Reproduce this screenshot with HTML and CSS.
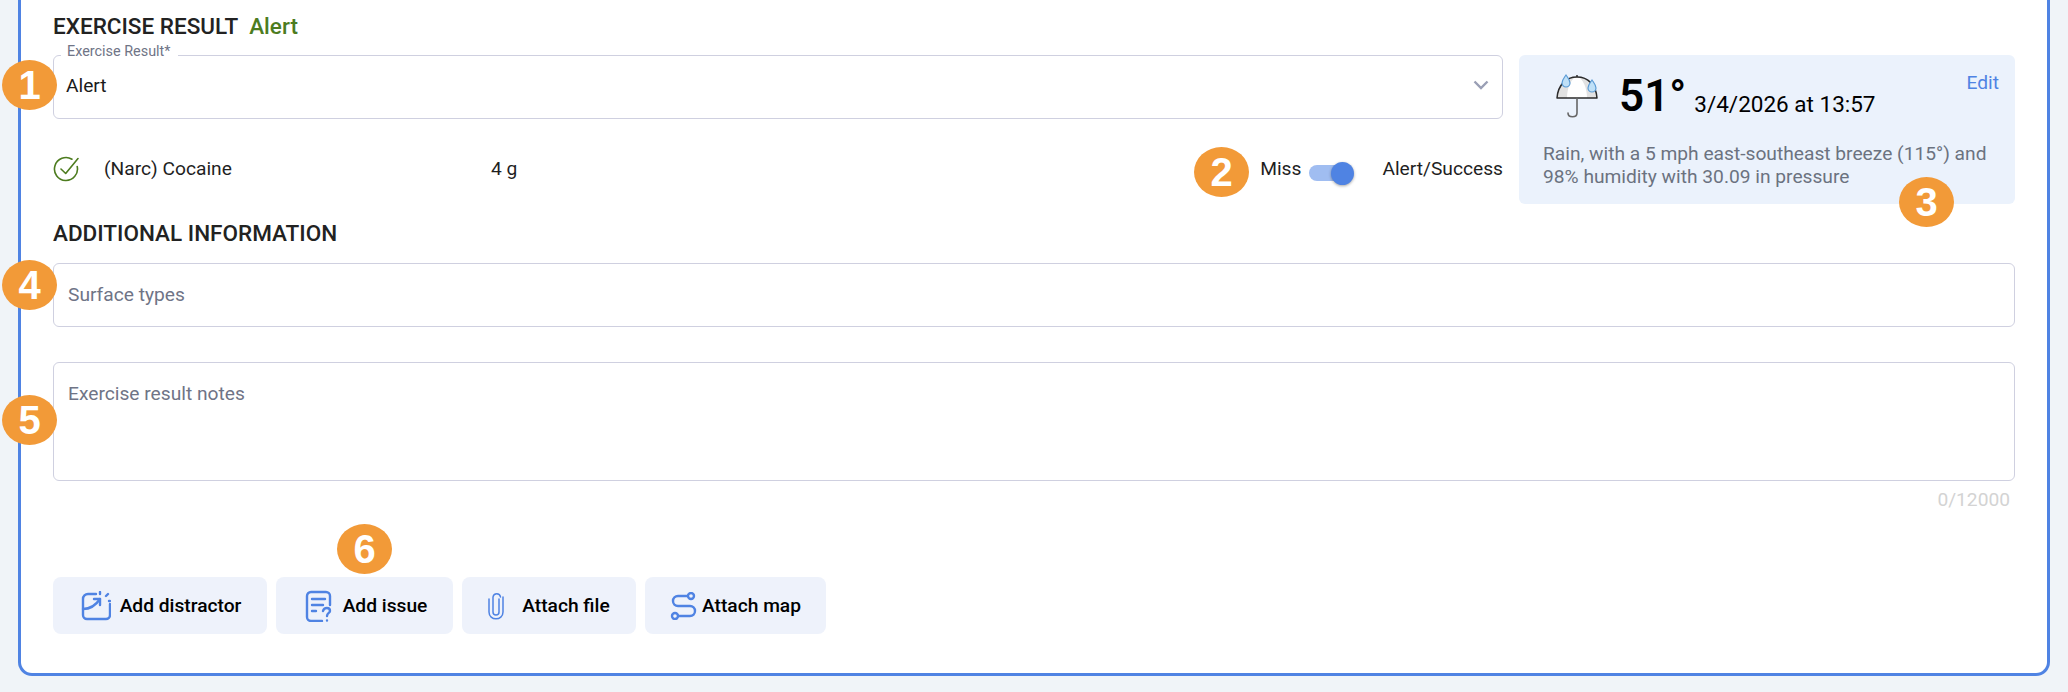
FILE: index.html
```html
<!DOCTYPE html>
<html lang="en">
<head>
<meta charset="utf-8">
<title>Exercise result</title>
<link rel="stylesheet" href="styles.css">
</head>
<body>
<main class="card">
  <h2 class="heading">EXERCISE RESULT <span class="heading-status">Alert</span></h2>
  <div class="top-row">
    <div class="top-left">
      <div class="field field-select">
        <span class="field-label">Exercise Result*</span>
        <span class="field-value">Alert</span>
        <svg class="chevron" viewBox="0 0 16 10" width="16" height="10"><path d="M1.500 1.500l6.500 6.500 6.500-6.500" fill="none" stroke="#9a9fb5" stroke-width="2.400"/></svg>
      </div>
      <div class="result-row">
        <svg class="check" viewBox="0 0 26 28" width="26" height="28"><path d="M24.200 12.500A11.500 11.500 0 1 1 19 5.200" fill="none" stroke="#4d7c1f" stroke-width="1.600" stroke-linecap="round"/><path d="M8 15l4.700 4.500L25 4.500" fill="none" stroke="#4d7c1f" stroke-width="1.600" stroke-linecap="round" stroke-linejoin="round"/></svg>
        <span class="substance">(Narc) Cocaine</span>
        <span class="amount">4 g</span>
        <span class="toggle-group">
          <span>Miss</span>
          <span class="toggle"><span class="toggle-thumb"></span></span>
          <span class="toggle-on">Alert/Success</span>
        </span>
      </div>
    </div>
    <aside class="weather">
      <div class="weather-top">
        <svg class="umbrella" viewBox="0 0 46 48" width="46" height="48">
          <path d="M2 27C3 14 11 6 22 6s19 8 20 21z" fill="#e2e2e2"/>
          <path d="M12 27c0-10 4-20 10-21 6 1 10 11 10 21z" fill="#fff"/>
          <path d="M2 27C3 14 11 6 22 6s19 8 20 21z" fill="none" stroke="#2b2b2b" stroke-width="1.500" stroke-linejoin="round"/>
          <path d="M22 4v2" stroke="#2b2b2b" stroke-width="1.500"/>
          <path d="M22 27v15c0 5-9 5-9 0" fill="none" stroke="#666" stroke-width="1.600" stroke-linecap="round"/>
          <path d="M11 4c2 3 4 5 4 8a4 4 0 0 1-8 0c0-3 2-5 4-8zM37 9c2 3 4 5 4 8a4 4 0 0 1-8 0c0-3 2-5 4-8z" fill="#bfe0f7" stroke="#5b9bd5" stroke-width="1.200"/>
        </svg>
        <span class="temp">51°</span>
        <span class="weather-date">3/4/2026 at 13:57</span>
        <span class="edit">Edit</span>
      </div>
      <p class="weather-text">Rain, with a 5 mph east-southeast breeze (115°) and 98% humidity with 30.09 in pressure</p>
    </aside>
  </div>
  <h2 class="heading heading-additional">ADDITIONAL INFORMATION</h2>
  <div class="field field-surface"><span class="placeholder">Surface types</span></div>
  <div class="field field-notes"><span class="placeholder">Exercise result notes</span></div>
  <div class="counter">0/12000</div>
  <div class="actions">
    <button class="btn btn-distractor">
      <svg viewBox="0 0 30 30" width="30" height="30" fill="none" stroke="#4f83e3" stroke-width="2.400" stroke-linecap="round" stroke-linejoin="round"><path d="M15 3H7a5 5 0 0 0-5 5v16a4 4 0 0 0 4 4h19a4 4 0 0 0 4-4V13"/><path d="M2 18c7 0 13-4 17-10"/><path d="M13 8h6v6"/><path d="M19 1v2M27 3l-2 2M28 10h1"/></svg>
      <span>Add distractor</span>
    </button>
    <button class="btn btn-issue">
      <svg viewBox="0 0 28 32" width="28" height="32" fill="none" stroke="#4f83e3" stroke-width="2.400" stroke-linecap="round" stroke-linejoin="round"><path d="M25 15V6a4 4 0 0 0-4-4H6a4 4 0 0 0-4 4v21a4 4 0 0 0 4 4h11"/><path d="M7 9h13M7 15h11M7 21h4"/><path d="M18 21c1-4 7-4 7 0 0 2-3 2-3 5M22 30.500v0"/></svg>
      <span>Add issue</span>
    </button>
    <button class="btn btn-file">
      <svg viewBox="0 0 16 28" width="16" height="28" fill="none" stroke="#4f83e3" stroke-width="1.500" stroke-linecap="round"><path d="M11 7v13a3 3 0 0 1-6 0V5a3.800 3.800 0 0 1 7.500 0"/><path d="M1 7v13c0 9 14 9 14 0V5"/></svg>
      <span>Attach file</span>
    </button>
    <button class="btn btn-map">
      <svg viewBox="0 0 27 28" width="27" height="28" fill="none" stroke="#4f83e3" stroke-width="2.400"><circle cx="21" cy="4" r="3"/><circle cx="5" cy="24" r="3"/><path d="M18 4H8a5 5 0 0 0 0 10h12a5 5 0 0 1 0 10H8"/></svg>
      <span>Attach map</span>
    </button>
  </div>
  <span class="badge badge-1">1</span>
  <span class="badge badge-2">2</span>
  <span class="badge badge-3">3</span>
  <span class="badge badge-4">4</span>
  <span class="badge badge-5">5</span>
  <span class="badge badge-6">6</span>
</main>
</body>
</html>
```
FILE: styles.css
```css
* { box-sizing: border-box; }
html, body { margin: 0; height: 692px; overflow: hidden; }
body {
  background: #f0f4f8;
  padding: 0 18px 16px;
  font-family: Roboto, "Liberation Sans", sans-serif;
  color: #1f1f1f;
}
.card {
  height: 676px;
  background: #fff;
  border: 3px solid #4f83e3;
  border-top: 0;
  border-radius: 0 0 14px 14px;
  padding: 14px 32px 0;
}
.heading {
  margin: 0;
  font-size: 22.5px;
  line-height: 24px;
  font-weight: 500;
  color: #222;
}
.heading-status { color: #4d7c1f; margin-left: 6px; }
.top-row { display: flex; gap: 16px; margin-top: 17px; }
.top-left { flex: 1; min-width: 0; }
.field {
  position: relative;
  display: flex;
  border: 1px solid #cfd0e0;
  border-radius: 6px;
  background: #fff;
}
.field-select { height: 64px; align-items: center; padding: 0 12px; }
.field-label {
  position: absolute;
  left: 7px;
  top: -12px;
  padding: 0 8px 0 6px;
  background: #fff;
  font-size: 14.400px;
  line-height: 16px;
  color: #6f7486;
}
.field-value { font-size: 19.200px; color: #1a1a1a; margin-top: -4px; }
.chevron { margin-left: auto; margin-top: -4px; margin-right: 1px; }
.result-row {
  display: flex;
  align-items: center;
  height: 32px;
  margin-top: 33px;
  font-size: 19.200px;
  color: #1f1f1f;
}
.check { flex: none; }
.substance { margin-left: 25px; width: 387px; }
.toggle-group { margin-left: auto; display: flex; align-items: center; }
.toggle {
  position: relative;
  width: 40px;
  height: 16px;
  margin: 10px 33px 0 8px;
  border-radius: 8px;
  background: #a0bdf1;
}
.toggle-thumb {
  position: absolute;
  right: -5px;
  top: -3px;
  width: 23px;
  height: 23px;
  border-radius: 50%;
  background: #4f83e3;
  box-shadow: 0 1px 3px rgba(0, 0, 0, .35);
}
.weather {
  flex: none;
  width: 496px;
  height: 149px;
  padding: 14px 16px 0 24px;
  background: #ebf2fc;
  border-radius: 6px;
}
.weather-top { display: flex; align-items: flex-start; height: 64px; }
.umbrella { flex: none; margin: 2px 0 0 12px; }
.temp {
  margin-left: 18px;
  font-size: 44px;
  line-height: 54px;
  font-weight: 600;
  color: #000;
}
.weather-date {
  margin: 21px 0 0 8px;
  font-size: 22.500px;
  line-height: 28px;
  color: #000;
}
.edit { margin: 2px 0 0 auto; font-size: 19.200px; line-height: 24px; color: #4f83e3; }
.weather-text {
  margin: 9px 0 0;
  font-size: 19.200px;
  line-height: 23px;
  color: #6b7280;
}
.heading-additional { margin-top: 17px; }
.field-surface { height: 64px; margin-top: 18px; padding: 0 14px; align-items: center; }
.field-notes { height: 119px; margin-top: 35px; padding: 19px 14px; }
.placeholder { font-size: 19.200px; line-height: 24px; color: #6f7486; }
.counter {
  margin-top: 9px;
  padding-right: 5px;
  text-align: right;
  font-size: 19.200px;
  line-height: 20px;
  color: #d3d3d3;
}
.actions { display: flex; gap: 9px; margin-top: 67px; }
.btn {
  display: flex;
  align-items: center;
  justify-content: center;
  gap: 9px;
  height: 57px;
  padding: 0;
  border: 0;
  border-radius: 8px;
  background: #eef2fb;
  font: 500 19.200px Roboto, "Liberation Sans", sans-serif;
  color: #000;
}
.btn svg { flex: none; }
.btn-distractor { width: 214px; padding-left: 2px; }
.btn-issue { width: 177px; padding-left: 3px; gap: 10px; }
.btn-file { width: 174px; gap: 18px; }
.btn-map { width: 181px; gap: 5px; }
.badge {
  position: absolute;
  display: flex;
  align-items: center;
  justify-content: center;
  width: 55px;
  height: 50px;
  border-radius: 50%;
  background: #f29a38;
  color: #fff;
  font: 700 40px "Liberation Sans", Arial, sans-serif;
}
.badge-1 { left: 2px; top: 60px; }
.badge-2 { left: 1194px; top: 147px; }
.badge-3 { left: 1899px; top: 177px; }
.badge-4 { left: 2px; top: 260px; }
.badge-5 { left: 2px; top: 395px; }
.badge-6 { left: 337px; top: 524px; }
```
